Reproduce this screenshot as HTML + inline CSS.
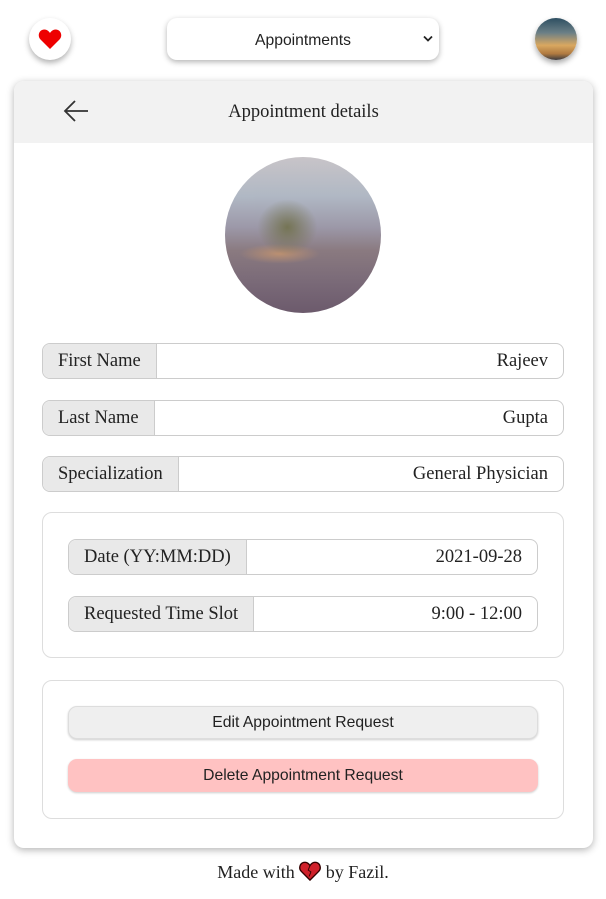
<!DOCTYPE html>
<html><head><meta charset="utf-8"><style>
*{box-sizing:border-box;margin:0;padding:0}
body{width:606px;height:899px;background:#fff;position:relative;font-family:"Liberation Serif",serif;color:#222;overflow:hidden}
.abs{position:absolute}
.heartbtn{left:29px;top:18px;width:42px;height:42px;border-radius:50%;background:#fff;box-shadow:0 3px 6px rgba(0,0,0,.3);display:flex;align-items:center;justify-content:center}
.sel{left:167px;top:18px;width:272px;height:42px;border-radius:10px;background:#fff;box-shadow:0 2px 6px rgba(0,0,0,.3);font-family:"Liberation Sans",sans-serif;font-size:15.7px;display:flex;align-items:center;justify-content:center;padding-top:3px}
.sel .car{position:absolute;right:6px;top:17px;line-height:0}
.av{left:535px;top:18px;width:42px;height:42px;border-radius:50%;background:linear-gradient(180deg,#2e4f62 0%,#6a7f86 35%,#d9a860 65%,#b07a40 85%,#3a3a40 100%);box-shadow:0 3px 6px rgba(0,0,0,.35)}
.card{left:14px;top:81px;width:579px;height:767px;border-radius:10px;background:#fff;box-shadow:0 2px 8px rgba(0,0,0,.3);overflow:hidden}
.hdr{position:absolute;left:0;top:0;width:100%;height:62px;background:#f2f2f2}
.hdr .t{position:absolute;left:0;right:0;top:21px;text-align:center;font-size:18.5px}
.photo{left:225px;top:157px;width:156px;height:156px;border-radius:50%;overflow:hidden;
background:
radial-gradient(ellipse 30px 28px at 40% 45%,rgba(110,110,70,.85),rgba(110,110,70,0)),
radial-gradient(ellipse 40px 10px at 35% 62%,rgba(200,150,110,.8),rgba(200,150,110,0)),
linear-gradient(180deg,#c8c4c8 0%,#b0b8c4 25%,#9c98a8 45%,#8a7a80 60%,#7a6a78 80%,#6c5a6c 100%)}
.row{position:absolute;height:36px;border:1px solid #ccc;border-radius:8px;background:#fff;overflow:hidden;font-size:18.5px}
.row .l{position:absolute;left:0;top:1px;bottom:0;background:#e9e9e9;border-right:1px solid #ccc;padding:0 15px;display:flex;align-items:center}
.row .l{top:0;padding-top:1px}
.row .v{position:absolute;right:15px;top:1px;bottom:0;display:flex;align-items:center}
.box{position:absolute;border:1px solid #ddd;border-radius:10px}
.btn{position:absolute;height:33px;border-radius:9px;font-family:"Liberation Sans",sans-serif;font-size:15.7px;display:flex;align-items:center;justify-content:center;box-shadow:0 1px 2px rgba(0,0,0,.2)}
.foot{left:0;right:0;top:861px;text-align:center;font-size:18px}
</style></head><body>
<div class="abs heartbtn"><svg width="24" height="22" viewBox="0 0 24 22"><path d="M12 21 L2.5 11.5 C-1 8 1 1.5 6.5 1.5 C9.3 1.5 11 3.5 12 5 C13 3.5 14.7 1.5 17.5 1.5 C23 1.5 25 8 21.5 11.5 Z" fill="#e00"/></svg></div>
<div class="abs sel">Appointments<span class="car"><svg width="10" height="7" viewBox="0 0 10 7"><path d="M1 1.5 L5 5.5 L9 1.5" stroke="#222" stroke-width="1.8" fill="none"/></svg></span></div>
<div class="abs av"></div>
<div class="abs card">
 <div class="hdr"><svg style="position:absolute;left:48px;top:18px" width="28" height="24" viewBox="0 0 28 24"><path d="M26 12 H3 M13 2 L3 12 L13 22" stroke="#333" stroke-width="1.8" fill="none"/></svg><div class="t">Appointment details</div></div>
</div>
<div class="abs photo"></div>
<div class="row" style="left:42px;top:343px;width:522px"><div class="l">First Name</div><div class="v">Rajeev</div></div>
<div class="row" style="left:42px;top:400px;width:522px"><div class="l">Last Name</div><div class="v">Gupta</div></div>
<div class="row" style="left:42px;top:456px;width:522px"><div class="l">Specialization</div><div class="v">General Physician</div></div>
<div class="box" style="left:42px;top:512px;width:522px;height:146px"></div>
<div class="row" style="left:68px;top:539px;width:470px"><div class="l">Date (YY:MM:DD)</div><div class="v">2021-09-28</div></div>
<div class="row" style="left:68px;top:596px;width:470px"><div class="l">Requested Time Slot</div><div class="v">9:00 - 12:00</div></div>
<div class="box" style="left:42px;top:680px;width:522px;height:139px"></div>
<div class="btn" style="left:68px;top:706px;width:470px;background:#efefef;border:1px solid #ddd">Edit Appointment Request</div>
<div class="btn" style="left:68px;top:759px;width:470px;background:#ffc2c2">Delete Appointment Request</div>
<div class="abs foot">Made with <svg width="22" height="20" viewBox="0 0 24 22" style="vertical-align:-3px"><path d="M12 21 L2.5 11.5 C-1 8 1 1.5 6.5 1.5 C9.3 1.5 11 3.5 12 5 C13 3.5 14.7 1.5 17.5 1.5 C23 1.5 25 8 21.5 11.5 Z" fill="#d0202a" stroke="#300" stroke-width="1.5"/><path d="M12 5 L10 10 L13 12 L11 17" stroke="#300" stroke-width="1" fill="none"/></svg> by Fazil.</div>
</body></html>
